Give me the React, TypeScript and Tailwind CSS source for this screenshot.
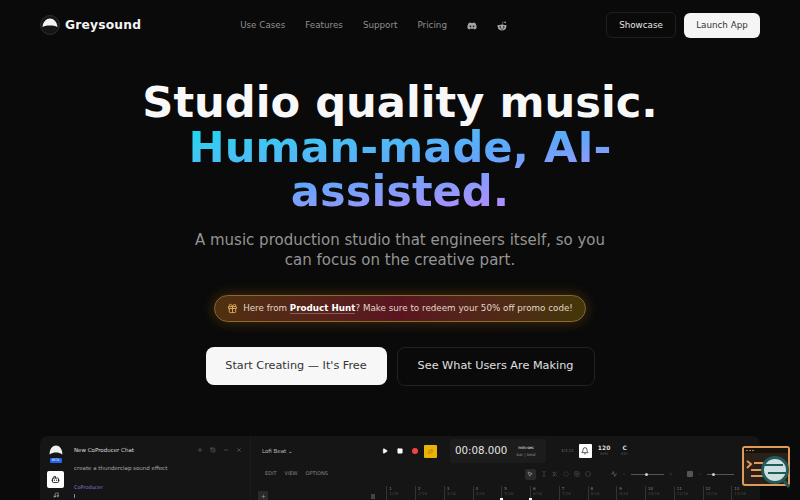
import { FaDiscord, FaRedditAlien } from "react-icons/fa";
import {
  Activity,
  Bell,
  Bot,
  Circle,
  Diamond,
  Gift,
  Grid2x2,
  History,
  Minus,
  MousePointer2,
  Music,
  Play,
  Plus,
  Repeat,
  Scissors,
  Square,
  TextCursor,
  X,
} from "lucide-react";

const font = { fontFamily: '"DejaVu Sans", sans-serif' };

function Logo() {
  return (
    <div className="flex h-[20px] w-[20px] items-center justify-center rounded-full border border-[#2e2e2e] bg-[#161616]">
      <svg viewBox="0 0 18 18" className="h-[18px] w-[18px]">
        <path d="M1.5 11 C2 5.5 5.5 2.5 9 2.5 C12.5 2.5 16 5.5 16.5 11 C14 10 12 9.6 9 9.6 C6 9.6 4 10 1.5 11 Z" fill="#f5f5f5" />
      </svg>
    </div>
  );
}

function Nav() {
  return (
    <header className="flex h-[50px] items-center justify-between px-10">
      <div className="flex items-center gap-[5px]">
        <Logo />
        <span className="text-[12.25px] font-bold tracking-[0.2px] text-[#f5f5f5]">Greysound</span>
      </div>
      <nav className="flex items-center gap-[20px] pt-[1px] text-[8.75px] text-[#8f8f8f]">
        <span>Use Cases</span>
        <span>Features</span>
        <span>Support</span>
        <span>Pricing</span>
        <FaDiscord className="h-[10px] w-[10px] text-[#a5a5a5]" />
        <FaRedditAlien className="h-[10px] w-[10px] text-[#a5a5a5]" />
      </nav>
      <div className="flex items-center gap-2 text-[8.75px]">
        <button className="h-[26px] w-[70px] rounded-md border border-[#1f1f1f] pt-[1px] text-[#e5e5e5]">Showcase</button>
        <button className="h-[25px] w-[76px] rounded-md bg-[#f5f5f5] pt-[1px] text-[#333]">Launch App</button>
      </div>
    </header>
  );
}

function Hero() {
  return (
    <section className="flex flex-col items-center pt-[30px] text-center">
      <h1 className="w-[520px] text-[43.2px] font-bold leading-[44.7px] text-[#f8f8f8]">
        Studio quality music.
        <span className="block bg-gradient-to-br from-[#22d3ee] from-10% via-[#60a5fa] via-50% to-[#c084fc] to-90% bg-clip-text text-transparent">
          Human-made, AI-assisted.
        </span>
      </h1>
      <p className="mt-[16px] w-[430px] text-[15px] leading-[20px] text-[#949494]">
        A music production studio that engineers itself, so you can focus on the creative part.
      </p>
      <div className="mt-[25px] flex h-[27px] items-center gap-[5px] rounded-full border border-[#8a6c30] bg-gradient-to-r from-[#50300f] via-[#5a1520] to-[#443608] px-[12px] text-[8.75px] text-[#e0d8cc] shadow-[0_0_14px_rgba(190,115,20,0.35)]">
        <Gift className="h-[11px] w-[11px] text-[#e0b060]" />
        <span>
          Here from{" "}
          <b className="border-b border-[#8a5a5a] font-bold text-white">Product Hunt</b>? Make sure to redeem your 50%
          off promo code!
        </span>
      </div>
      <div className="mt-[25px] flex gap-[10px] text-[11.25px]">
        <button className="h-[38px] w-[181px] rounded-lg bg-[#f7f7f7] text-[#333]">Start Creating — It's Free</button>
        <button className="h-[39px] w-[198px] rounded-lg border border-[#222] text-[#e0e0e0]">
          See What Users Are Making
        </button>
      </div>
    </section>
  );
}

function Ruler() {
  const bars = [1, 2, 3, 4, 5, 6, 7, 8, 9, 10, 11, 12, 13];
  return (
    <div className="flex">
      {bars.map((b) => (
        <div key={b} className="relative h-[16px] w-[28.75px] border-l border-[#333] pl-[2px] text-[4px] leading-[5px] text-[#888]">
          <div>{b}</div>
          <div className="text-[#444]">{b}/16</div>
          {(b === 5 || b === 6) && <span className="absolute left-[-2px] top-[12px] h-[3px] w-[3px] bg-white" />}
        </div>
      ))}
    </div>
  );
}

function Slider({ width, dot }: { width: number; dot: number }) {
  return (
    <span className="relative block h-[1px] bg-[#555]" style={{ width }}>
      <span className="absolute top-[-1px] h-[3px] w-[3px] rounded-full bg-[#ccc]" style={{ left: dot }} />
    </span>
  );
}

function Preview() {
  return (
    <div className="mx-10 mt-[50px] flex h-[80px] overflow-hidden rounded-t-lg bg-[#151515]">
      <div className="flex w-[31px] shrink-0 flex-col items-center pt-[8px]">
        <svg viewBox="0 0 20 20" className="h-[16px] w-[16px]">
          <path d="M2 13 C2 6 6 2 10 2 C14 2 18 6 18 13 C15 11 13 10.5 10 10.5 C7 10.5 5 11 2 13 Z" fill="#f0f0f0" />
        </svg>
        <span className="mt-[-2px] block w-[12px] rounded-[1px] bg-[#2563eb] text-center text-[3px] leading-[5px] text-white">BETA</span>
        <span className="mt-[8px] flex h-[17px] w-[17px] items-center justify-center rounded-[2px] bg-white">
          <Bot className="h-[9px] w-[9px] text-black" />
        </span>
        <Music className="mt-[4px] h-[6px] w-[6px] text-[#ccc]" />
      </div>
      <div className="ml-[3px] w-[176px] shrink-0 pr-[8px] pt-[10px]">
        <div className="flex items-center justify-between text-[5.5px] text-[#ddd]">
          <span>New CoProducer Chat</span>
          <span className="flex items-center gap-[7px] text-[#777]">
            <Plus className="h-[6px] w-[6px]" />
            <History className="h-[6px] w-[6px]" />
            <Minus className="h-[6px] w-[6px]" />
            <X className="h-[6px] w-[6px]" />
          </span>
        </div>
        <div className="mt-[10px] text-[5.5px] text-[#aaa]">create a thunderclap sound effect</div>
        <div className="mt-[11px] text-[5px] text-[#8b7fd6]">CoProducer</div>
        <span className="mt-[3px] block h-[4px] w-[1px] bg-[#8b7fd6]" />
      </div>
      <div className="flex min-w-0 flex-1 flex-col border-l border-[#1c1c1c]">
        <div className="flex h-[30px] items-center pl-[11px]">
          <span className="w-[120px] shrink-0 text-[5.5px] text-[#bbb]">Lofi Beat ⌄</span>
          <Play className="h-[6px] w-[6px] fill-white text-white" />
          <Square className="ml-[9px] h-[6px] w-[6px] fill-white text-white" />
          <span className="ml-[9px] h-[6px] w-[6px] rounded-full bg-[#ef4444]" />
          <span className="ml-[6px] flex h-[13px] w-[13px] items-center justify-center rounded-[1px] bg-[#eab308]">
            <Repeat className="h-[5px] w-[5px] text-[#a16207]" />
          </span>
          <div className="ml-[13px] flex h-[24px] w-[96px] shrink-0 items-center gap-[9px] rounded-[2px] bg-[#1c1c1c] pl-[5px]">
            <span className="text-[10.25px] text-[#e5e5e5]">00:08.000</span>
            <span className="text-center text-[4px] leading-[7px] text-[#888]">
              <span className="block text-white">min:sec</span>bar | beat
            </span>
          </div>
          <span className="ml-[15px] text-[4px] text-[#666]">4/4 21</span>
          <span className="ml-[5px] flex h-[14px] w-[13px] items-center justify-center rounded-[1px] bg-white">
            <Bell className="h-[8px] w-[8px] text-black" />
          </span>
          <span className="ml-[6px] text-center text-[6px] font-bold leading-[6px] text-[#ddd]">
            120<span className="block text-[3.5px] font-normal text-[#555]">BPM</span>
          </span>
          <span className="ml-[11px] text-center text-[6px] font-bold leading-[6px] text-[#ddd]">
            C<span className="block text-[3.5px] font-normal text-[#555]">KEY</span>
          </span>
        </div>
        <div className="flex h-[16px] items-center pl-[14px] text-[5px] text-[#888]">
          <span>EDIT</span>
          <span className="ml-[8px]">VIEW</span>
          <span className="ml-[8px]">OPTIONS</span>
          <div className="ml-[197px] flex items-center gap-[5px] text-[#555]">
            <span className="flex h-[11px] w-[11px] items-center justify-center rounded-[2px] bg-[#2a2a2a]">
              <MousePointer2 className="h-[6px] w-[6px] text-[#ccc]" />
            </span>
            <TextCursor className="h-[6px] w-[6px]" />
            <Scissors className="h-[6px] w-[6px]" />
            <Diamond className="h-[6px] w-[6px]" />
            <Grid2x2 className="h-[6px] w-[6px]" />
            <Circle className="h-[6px] w-[6px]" />
            <Activity className="ml-[15px] h-[6px] w-[6px] text-[#888]" />
            <Minus className="h-[4px] w-[4px]" />
            <Slider width={33} dot={14} />
            <Plus className="h-[4px] w-[4px]" />
            <span className="ml-[9px] h-[6px] w-[6px] rounded-[1px] bg-[#555]" />
            <Minus className="h-[4px] w-[4px]" />
            <Slider width={27} dot={5} />
          </div>
        </div>
        <div className="flex flex-1 items-start pl-[7px] pt-[4px]">
          <span className="mt-[5px] flex h-[10px] w-[12px] items-center justify-center rounded-[1px] bg-[#2a2a2a]">
            <Plus className="h-[5px] w-[5px] text-[#bbb]" />
          </span>
          <span className="ml-[103px] mt-[8px] h-[5px] w-[5px] bg-[#444]" />
          <span className="ml-[11px]">
            <Ruler />
          </span>
        </div>
      </div>
    </div>
  );
}

function FloatIcon() {
  return (
    <svg viewBox="0 0 48 44" className="absolute left-[742px] top-[446px] h-[44px] w-[48px]">
      <rect x="1" y="1" width="46" height="38" rx="2" fill="#2a2018" stroke="#e09a5c" strokeWidth="2" />
      <rect x="2" y="2" width="44" height="5" fill="#17110c" />
      <circle cx="5" cy="4.5" r="0.8" fill="#e09a5c" />
      <circle cx="8" cy="4.5" r="0.8" fill="#e09a5c" />
      <circle cx="11" cy="4.5" r="0.8" fill="#e09a5c" />
      <path d="M5 15 L9 18 L5 22 M12 17 H26 M9 24 H24 M9 30 H24" fill="none" stroke="#e09a5c" strokeWidth="2" />
      <circle cx="33" cy="24" r="12.5" fill="#cfe0e0" stroke="#1f5c5c" strokeWidth="3" />
      <path d="M23 19 H41 M26 27 H46" stroke="#1f5c5c" strokeWidth="2" />
      <path d="M42 35 L47 41" stroke="#1f5c5c" strokeWidth="3" />
    </svg>
  );
}

export default function App() {
  return (
    <div className="relative h-[500px] w-[800px] overflow-hidden bg-[#0a0a0a]" style={font}>
      <Nav />
      <Hero />
      <Preview />
      <FloatIcon />
    </div>
  );
}
